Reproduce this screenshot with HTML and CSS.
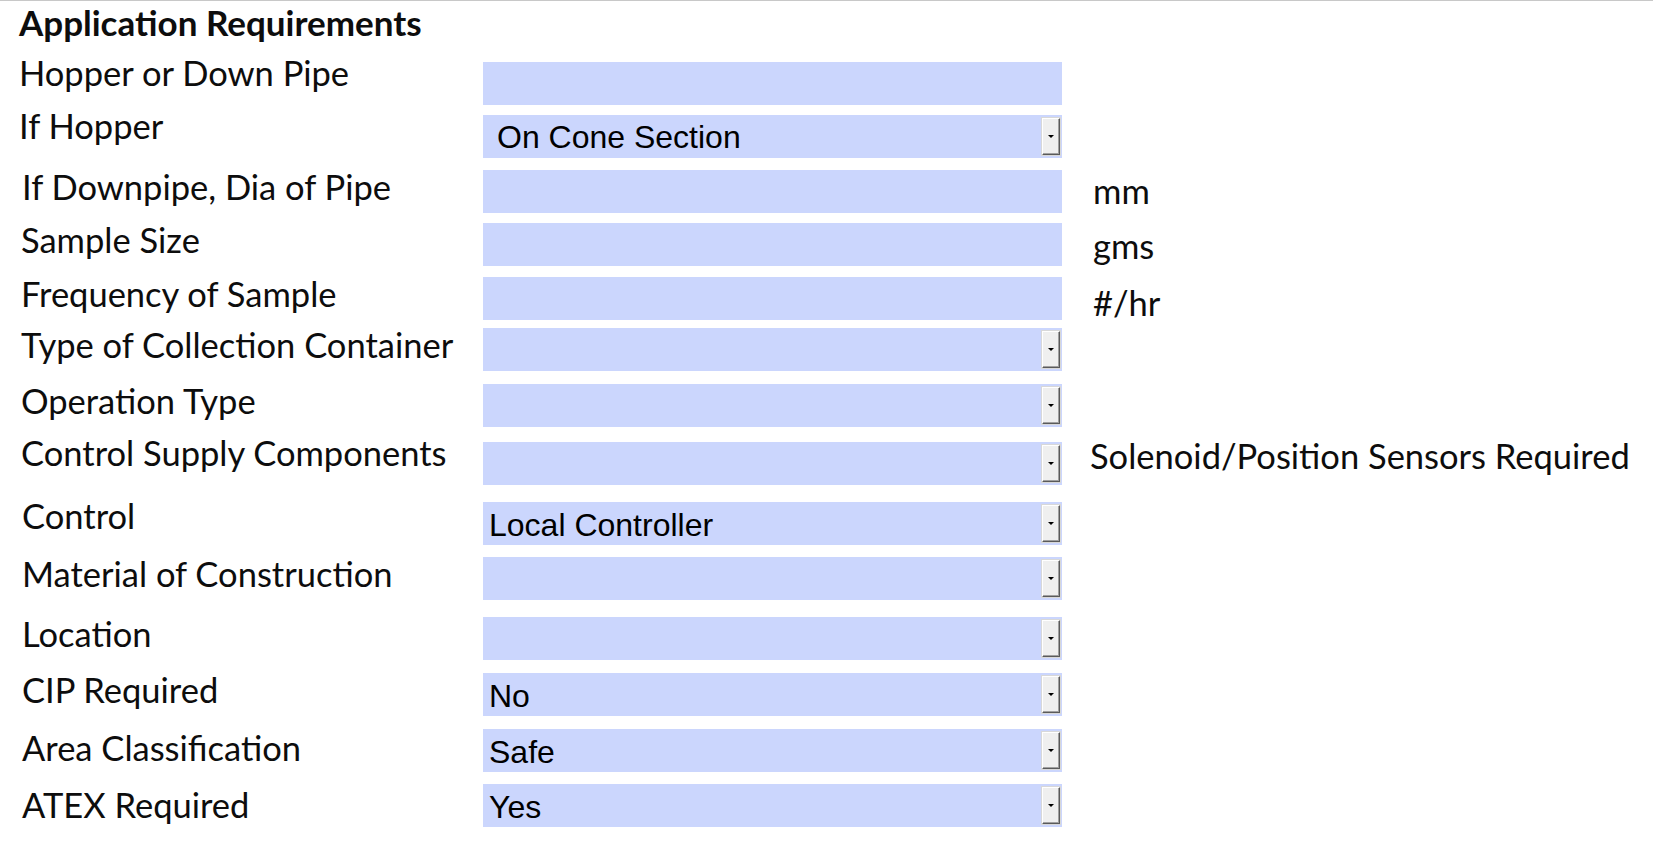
FILE: index.html
```html
<!DOCTYPE html>
<html lang="en">
<head>
<meta charset="utf-8">
<title>Application Requirements</title>
<link rel="stylesheet" href="styles.css">
</head>
<body>
<div class="page">
  <div class="sheet">
    <h1 class="title">Application Requirements</h1>

    <div class="label lift-lg">Hopper or Down Pipe</div>
    <div class="field"></div>

    <div class="label lift-lg">If Hopper</div>
    <div class="field select"><span class="value value-wide">On Cone Section</span><span class="btn"><i class="arrow"></i></span></div>

    <div class="label indent">If Downpipe, Dia of Pipe</div>
    <div class="field"></div>
    <div class="unit unit-hi">mm</div>

    <div class="label indent-sm">Sample Size</div>
    <div class="field"></div>
    <div class="unit">gms</div>

    <div class="label indent-sm">Frequency of Sample</div>
    <div class="field"></div>
    <div class="unit unit-lo">#/hr</div>

    <div class="label indent-sm">Type of Collection Container</div>
    <div class="field select"><span class="value"></span><span class="btn"><i class="arrow"></i></span></div>

    <div class="label indent-sm">Operation Type</div>
    <div class="field select"><span class="value"></span><span class="btn"><i class="arrow"></i></span></div>

    <div class="label lift-lg indent-sm">Control Supply Components</div>
    <div class="field select"><span class="value"></span><span class="btn"><i class="arrow"></i></span></div>
    <div class="unit unit-up">Solenoid/Position Sensors Required</div>

    <div class="label lift-md indent">Control</div>
    <div class="field select"><span class="value">Local Controller</span><span class="btn"><i class="arrow"></i></span></div>

    <div class="label indent">Material of Construction</div>
    <div class="field select"><span class="value"></span><span class="btn"><i class="arrow"></i></span></div>

    <div class="label indent">Location</div>
    <div class="field select"><span class="value"></span><span class="btn"><i class="arrow"></i></span></div>

    <div class="label indent">CIP Required</div>
    <div class="field select"><span class="value">No</span><span class="btn"><i class="arrow"></i></span></div>

    <div class="label lift-sm indent">Area Classification</div>
    <div class="field select"><span class="value">Safe</span><span class="btn"><i class="arrow"></i></span></div>

    <div class="label lift-xs indent">ATEX Required</div>
    <div class="field select"><span class="value">Yes</span><span class="btn"><i class="arrow"></i></span></div>
  </div>
</div>
</body>
</html>
```

FILE: styles.css
```css
html, body {
  margin: 0;
  padding: 0;
  background: #ffffff;
}

body {
  font-family: Lato, "Open Sans", sans-serif;
  color: #0d0d0d;
}

.page {
  width: 1653px;
  height: 862px;
  border-top: 1px solid #c8c8c8;
}

.sheet {
  display: grid;
  grid-template-columns: 464px 579px auto;
  grid-template-rows: 61px 53px 55px 53px 54px 51px 56px 58px 60px 55px 60px 56px 56px 55px;
  padding-left: 19px;
}

.title {
  grid-column: 1 / 4;
  margin: 0;
  font-size: 35px;
  font-weight: 700;
  line-height: 42px;
  align-self: start;
}

.label {
  grid-column: 1;
  align-self: start;
  font-size: 34.5px;
  line-height: 43px;
  margin-top: -5px;
  white-space: nowrap;
}

.indent {
  padding-left: 3px;
}

.indent-sm {
  padding-left: 2px;
}

.lift-lg {
  margin-top: -11px;
}

.lift-md {
  margin-top: -8px;
}

.lift-sm {
  margin-top: -3px;
}

.lift-xs {
  margin-top: -1px;
}

.field {
  grid-column: 2;
  align-self: start;
  height: 43px;
  background: #cbd6fd;
  box-sizing: border-box;
}

.unit {
  grid-column: 3;
  align-self: start;
  font-size: 34.5px;
  line-height: 43px;
  margin-top: 1px;
  margin-left: 31px;
  white-space: nowrap;
}

.unit-hi {
  margin-top: -1px;
}

.unit-lo {
  margin-top: 4px;
}

.unit-up {
  margin-top: -8px;
  margin-left: 28px;
}

.select {
  display: flex;
  align-items: center;
  padding: 3px 2px 3px 6px;
}

.value {
  flex: 1;
  font-family: "Liberation Sans", Arial, sans-serif;
  font-size: 32px;
  line-height: 37px;
  color: #000000;
  padding-top: 3px;
}

.value-wide {
  padding-left: 8px;
  padding-top: 2px;
}

.btn {
  align-self: stretch;
  width: 18px;
  box-sizing: border-box;
  background: #efefef;
  border-top: 1px solid #ffffff;
  border-left: 1px solid #ffffff;
  border-right: 1px solid #5a5a5a;
  border-bottom: 1px solid #5a5a5a;
  box-shadow: inset -1px -1px 0 #a0a0a0, 0 0 0 1px #d8d8d8;
  display: flex;
  align-items: center;
  justify-content: center;
}

.arrow {
  display: block;
  width: 0;
  height: 0;
  border-left: 3px solid transparent;
  border-right: 3px solid transparent;
  border-top: 3px solid #000000;
  margin-left: -1px;
}
```
